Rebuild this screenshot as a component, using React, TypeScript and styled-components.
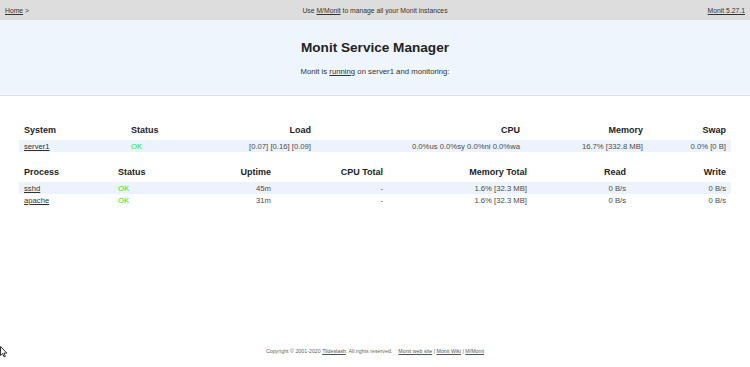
import React from 'react';
import styled, { createGlobalStyle } from 'styled-components';

const GlobalStyle = createGlobalStyle`
  html, body {
    margin: 0;
    padding: 0;
    background: #fff;
  }

  body {
    font-family: 'Liberation Sans', Arial, sans-serif;
    color: #333;
  }
`;

const Page = styled.div`
  min-height: 367px;
  display: flex;
  flex-direction: column;
  position: relative;
`;

const TopBar = styled.div`
  height: 20px;
  background: #dddddd;
  display: grid;
  grid-template-columns: 1fr auto 1fr;
  align-items: center;
  padding: 0 5px;
  font-size: 6.8px;
  color: #333;

  .right {
    text-align: right;
  }
`;

const Link = styled.a`
  color: #333;
  text-decoration: underline;
  cursor: pointer;
`;

const Hero = styled.header`
  height: 75px;
  background: #eef5fd;
  border-bottom: 1px solid #d9dee6;
  display: flex;
  flex-direction: column;
  align-items: center;

  h1 {
    margin: 19px 0 0;
    font-size: 13.6px;
    font-weight: bold;
    color: #222;
    line-height: 18px;
  }

  p {
    margin: 10px 0 0;
    font-size: 7.75px;
    color: #333;
    line-height: 10px;
  }
`;

const Content = styled.main`
  padding: 24px 19px 0 19px;
  display: flex;
  flex-direction: column;
  gap: 10px;
`;

const Table = styled.table`
  width: 712px;
  border-collapse: collapse;
  table-layout: fixed;

  th {
    height: 20px;
    padding: 0 5px;
    font-size: 9px;
    font-weight: bold;
    color: #222;
    text-align: right;
    vertical-align: middle;
  }

  td {
    height: 12px;
    padding: 0 5px;
    font-size: 7.7px;
    color: #4a4a4a;
    text-align: right;
    vertical-align: middle;
    white-space: nowrap;
  }

  th.left,
  td.left {
    text-align: left;
  }
`;

const Row = styled.tr<{ $stripe?: boolean }>`
  background: ${p => (p.$stripe ? '#edf3fc' : 'transparent')};
`;

const Ok = styled.span`
  color: #11ee11;
`;

const Footer = styled.footer`
  margin-top: auto;
  padding-bottom: 13px;
  text-align: center;
  font-size: 5.3px;
  color: #666;

  a {
    color: #555;
  }

  .links {
    margin-left: 6px;
  }
`;

const Cursor = styled.svg`
  position: absolute;
  left: 0;
  top: 346px;
`;

interface Col {
  label: string;
  width: number;
  left?: boolean;
}

const systemCols: Col[] = [
  { label: 'System', width: 107, left: true },
  { label: 'Status', width: 74, left: true },
  { label: 'Load', width: 116 },
  { label: 'CPU', width: 209 },
  { label: 'Memory', width: 123 },
  { label: 'Swap', width: 83 },
];

const processCols: Col[] = [
  { label: 'Process', width: 94, left: true },
  { label: 'Status', width: 77, left: true },
  { label: 'Uptime', width: 86 },
  { label: 'CPU Total', width: 112 },
  { label: 'Memory Total', width: 144 },
  { label: 'Read', width: 99 },
  { label: 'Write', width: 100 },
];

const processes = [
  { name: 'sshd', uptime: '45m', cpu: '-', mem: '1.6% [32.3 MB]', read: '0 B/s', write: '0 B/s' },
  { name: 'apache', uptime: '31m', cpu: '-', mem: '1.6% [32.3 MB]', read: '0 B/s', write: '0 B/s' },
];

const Head = ({ cols }: { cols: Col[] }) => (
  <>
    <colgroup>
      {cols.map(c => (
        <col key={c.label} style={{ width: c.width }} />
      ))}
    </colgroup>
    <thead>
      <tr>
        {cols.map(c => (
          <th key={c.label} className={c.left ? 'left' : ''}>
            {c.label}
          </th>
        ))}
      </tr>
    </thead>
  </>
);

export default function App() {
  return (
    <Page>
      <GlobalStyle />
      <TopBar>
        <div>
          <Link>Home</Link> &gt;
        </div>
        <div>
          Use <Link>M/Monit</Link> to manage all your Monit instances
        </div>
        <div className="right">
          <Link>Monit 5.27.1</Link>
        </div>
      </TopBar>

      <Hero>
        <h1>Monit Service Manager</h1>
        <p>
          Monit is <Link>running</Link> on server1 and monitoring:
        </p>
      </Hero>

      <Content>
        <Table>
          <Head cols={systemCols} />
          <tbody>
            <Row $stripe>
              <td className="left">
                <Link>server1</Link>
              </td>
              <td className="left">
                <Ok>OK</Ok>
              </td>
              <td>[0.07] [0.16] [0.09]</td>
              <td>0.0%us 0.0%sy 0.0%ni 0.0%wa</td>
              <td>16.7% [332.8 MB]</td>
              <td>0.0% [0 B]</td>
            </Row>
          </tbody>
        </Table>

        <Table>
          <Head cols={processCols} />
          <tbody>
            {processes.map((p, i) => (
              <Row key={p.name} $stripe={i % 2 === 0}>
                <td className="left">
                  <Link>{p.name}</Link>
                </td>
                <td className="left">
                  <Ok>OK</Ok>
                </td>
                <td>{p.uptime}</td>
                <td>{p.cpu}</td>
                <td>{p.mem}</td>
                <td>{p.read}</td>
                <td>{p.write}</td>
              </Row>
            ))}
          </tbody>
        </Table>
      </Content>

      <Footer>
        Copyright © 2001-2020 <a href="#">Tildeslash</a>. All rights reserved.
        <span className="links">
          <a href="#">Monit web site</a> | <a href="#">Monit Wiki</a> |{' '}
          <a href="#">M/Monit</a>
        </span>
      </Footer>

      <Cursor width="8" height="12" viewBox="0 0 8 12">
        <path d="M0.5 0.5 L0.5 9.5 L2.6 7.6 L4.2 11 L5.4 10.4 L3.9 7.1 L6.8 7.1 Z" fill="#fff" stroke="#000" strokeWidth="0.8" />
      </Cursor>
    </Page>
  );
}
